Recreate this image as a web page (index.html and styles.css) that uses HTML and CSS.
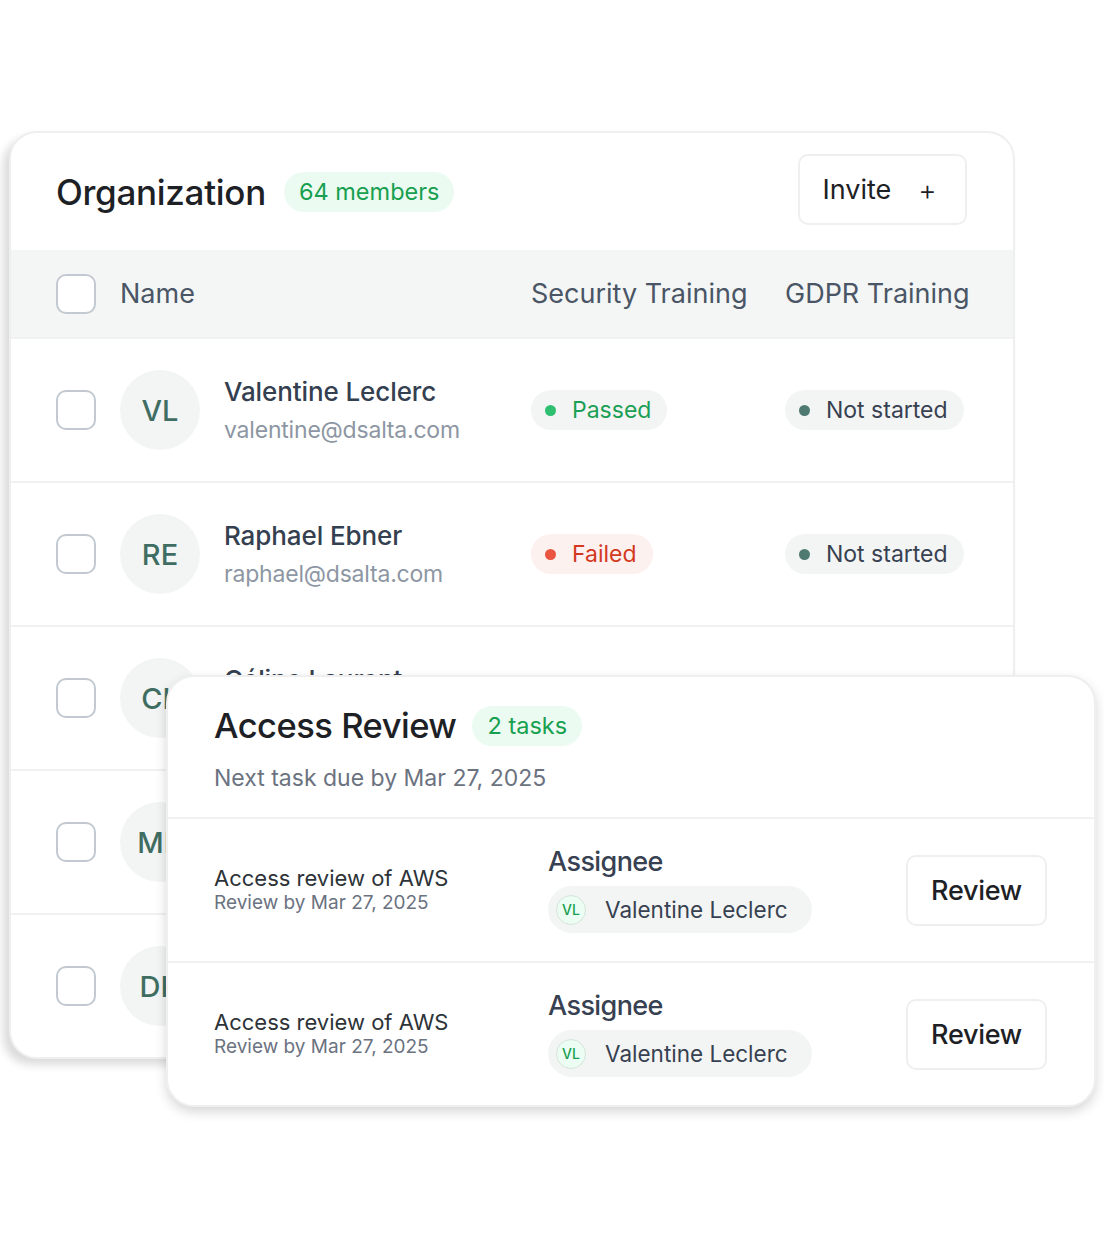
FILE: index.html
```html
<!DOCTYPE html>
<html lang="en">
<head>
    <meta charset="UTF-8">
    <meta name="viewport" content="width=device-width, initial-scale=1.0">
    <title>Organization</title>
    <link rel="stylesheet" href="styles.css">
</head>
<body>
    <div class="stage">

        <!-- members table -->
        <div class="card org-card">
            <div class="card-head">
                <h2>Organization</h2>
                <span class="count-badge">64 members</span>
                <button class="btn invite-btn">Invite <span class="plus">+</span></button>
            </div>

            <div class="table-row table-head">
                <span class="checkbox"></span>
                <span class="col-name">Name</span>
                <span class="col-status">Security Training</span>
                <span class="col-status">GDPR Training</span>
            </div>

            <div class="table-row">
                <span class="checkbox"></span>
                <div class="col-name member">
                    <span class="avatar">VL</span>
                    <div>
                        <div class="member-name">Valentine Leclerc</div>
                        <div class="member-email">valentine@dsalta.com</div>
                    </div>
                </div>
                <div class="col-status"><span class="status passed">Passed</span></div>
                <div class="col-status"><span class="status idle">Not started</span></div>
            </div>

            <div class="table-row">
                <span class="checkbox"></span>
                <div class="col-name member">
                    <span class="avatar">RE</span>
                    <div>
                        <div class="member-name">Raphael Ebner</div>
                        <div class="member-email">raphael@dsalta.com</div>
                    </div>
                </div>
                <div class="col-status"><span class="status failed">Failed</span></div>
                <div class="col-status"><span class="status idle">Not started</span></div>
            </div>

            <div class="table-row">
                <span class="checkbox"></span>
                <div class="col-name member">
                    <span class="avatar">CL</span>
                    <div>
                        <div class="member-name">Céline Laurent</div>
                        <div class="member-email">celine@dsalta.com</div>
                    </div>
                </div>
                <div class="col-status"><span class="status passed">Passed</span></div>
                <div class="col-status"><span class="status idle">Not started</span></div>
            </div>

            <div class="table-row">
                <span class="checkbox"></span>
                <div class="col-name member">
                    <span class="avatar">MB</span>
                    <div>
                        <div class="member-name">Marc Bernard</div>
                        <div class="member-email">marc@dsalta.com</div>
                    </div>
                </div>
                <div class="col-status"><span class="status passed">Passed</span></div>
                <div class="col-status"><span class="status idle">Not started</span></div>
            </div>

            <div class="table-row">
                <span class="checkbox"></span>
                <div class="col-name member">
                    <span class="avatar">DK</span>
                    <div>
                        <div class="member-name">David Keller</div>
                        <div class="member-email">david@dsalta.com</div>
                    </div>
                </div>
                <div class="col-status"><span class="status passed">Passed</span></div>
                <div class="col-status"><span class="status idle">Not started</span></div>
            </div>
        </div>

        <!-- review tasks popover -->
        <div class="card review-card">
            <div class="review-head">
                <div class="review-title">
                    <h2>Access Review</h2>
                    <span class="count-badge">2 tasks</span>
                </div>
                <p class="review-sub">Next task due by Mar 27, 2025</p>
            </div>

            <div class="task">
                <div class="task-info">
                    <div class="task-name">Access review of AWS</div>
                    <div class="task-due">Review by Mar 27, 2025</div>
                </div>
                <div class="task-assignee">
                    <div class="assignee-label">Assignee</div>
                    <span class="assignee"><span class="mini-avatar">VL</span>Valentine Leclerc</span>
                </div>
                <button class="btn review-btn">Review</button>
            </div>

            <div class="task">
                <div class="task-info">
                    <div class="task-name">Access review of AWS</div>
                    <div class="task-due">Review by Mar 27, 2025</div>
                </div>
                <div class="task-assignee">
                    <div class="assignee-label">Assignee</div>
                    <span class="assignee"><span class="mini-avatar">VL</span>Valentine Leclerc</span>
                </div>
                <button class="btn review-btn">Review</button>
            </div>
        </div>

    </div>
</body>
</html>
```

FILE: styles.css
```css
body {
    margin: 0;
    background: #fff;
    font-family: Inter, "Liberation Sans", Arial, sans-serif;
    color: #1d2125;
}

.stage {
    position: relative;
    width: 1104px;
    height: 1236px;
    overflow: hidden;
    padding-top: 131px;
    box-sizing: border-box;
}

.card {
    background: #fff;
    border: 2px solid #efefef;
    border-radius: 28px;
    box-sizing: border-box;
    overflow: hidden;
}

/* ---------- organization table ---------- */

.org-card {
    width: 1006px;
    margin-left: 9px;
    box-shadow: -6px 6px 8px rgba(0, 0, 0, 0.14);
}

.card-head {
    display: flex;
    align-items: center;
    height: 117px;
    padding: 0 46px 0 45px;
}

.card-head h2 {
    margin: 0 18px 0 0;
    font-size: 35px;
    font-weight: 500;
    letter-spacing: -0.3px;
}

.count-badge {
    display: inline-flex;
    align-items: center;
    height: 40px;
    padding: 0 15px;
    border-radius: 20px;
    background: #ebfbf1;
    color: #17a050;
    font-size: 23.5px;
}

.btn {
    font-family: inherit;
    background: #fff;
    border: 2px solid #efefef;
    border-radius: 10px;
    color: #1d2125;
    cursor: pointer;
}

.invite-btn {
    margin-left: auto;
    margin-bottom: 4px;
    width: 169px;
    height: 71px;
    font-size: 27px;
    display: flex;
    align-items: center;
    justify-content: center;
    gap: 27px;
    padding: 0 6px 0 0;
}

.invite-btn .plus {
    font-size: 28px;
    font-weight: 300;
}

.table-row {
    display: flex;
    align-items: center;
    height: 144px;
    padding-left: 45px;
    border-top: 2px solid #f0f1f1;
    box-sizing: border-box;
}

.table-head {
    height: 87px;
    border-top: none;
    background: #f4f6f5;
    color: #4a5565;
    font-size: 27px;
}

.checkbox {
    width: 40px;
    height: 40px;
    flex: none;
    border: 2px solid #c3c9d1;
    border-radius: 10px;
    box-sizing: border-box;
    background: #fff;
    margin-right: 24px;
}

.col-name {
    flex: none;
    width: 411px;
}

.col-status {
    flex: none;
    width: 254px;
    white-space: nowrap;
}

.member {
    display: flex;
    align-items: center;
}

.avatar {
    width: 80px;
    height: 80px;
    flex: none;
    border-radius: 50%;
    background: #f3f5f4;
    color: #3f6d62;
    font-size: 29px;
    font-weight: 500;
    display: flex;
    align-items: center;
    justify-content: center;
    margin-right: 24px;
}

.member-name {
    font-size: 26px;
    font-weight: 500;
    color: #344050;
    letter-spacing: -0.1px;
}

.member-email {
    margin-top: 9px;
    font-size: 23px;
    color: #8d96a3;
    letter-spacing: -0.2px;
}

.status {
    display: inline-flex;
    align-items: center;
    height: 40px;
    padding: 0 16px 0 14px;
    border-radius: 20px;
    background: #f3f5f4;
    font-size: 23px;
}

.status::before {
    content: "";
    width: 11px;
    height: 11px;
    border-radius: 50%;
    margin-right: 16px;
}

.status.passed { color: #1a9f55; }
.status.passed::before { background: #2fbf71; }

.status.failed { color: #d3391f; background: #fdf1ef; }
.status.failed::before { background: #ea5541; }

.status.idle { color: #374151; }
.status.idle::before { background: #4f7a72; }

/* ---------- access review popover ---------- */

.review-card {
    position: absolute;
    left: 166px;
    top: 675px;
    width: 930px;
    box-shadow: 0 5px 12px rgba(0, 0, 0, 0.16);
}

.review-head {
    height: 140px;
    padding: 28px 47px 0 46px;
    box-sizing: border-box;
}

.review-title {
    display: flex;
    align-items: center;
}

.review-title h2 {
    margin: 0 16px 0 0;
    font-size: 34.5px;
    font-weight: 500;
    letter-spacing: -0.5px;
}

.review-sub {
    margin: 18px 0 0;
    font-size: 23px;
    color: #6b7280;
}

.task {
    display: flex;
    align-items: center;
    height: 144px;
    padding: 0 47px 0 46px;
    border-top: 2px solid #f0f1f1;
    box-sizing: border-box;
}

.task-info {
    width: 334px;
    padding-bottom: 2px;
}

.task-name {
    font-size: 22px;
    color: #2d3338;
}

.task-due {
    font-size: 19px;
    color: #6b7280;
}

.assignee-label {
    font-size: 27px;
    line-height: 1.1;
    font-weight: 500;
    color: #374151;
    letter-spacing: -0.6px;
    margin-bottom: 10px;
}

.assignee {
    display: inline-flex;
    align-items: center;
    height: 47px;
    padding: 0 24px 0 8px;
    border-radius: 24px;
    background: #f3f5f4;
    font-size: 22.5px;
    color: #374151;
}

.mini-avatar {
    width: 30px;
    height: 30px;
    border-radius: 50%;
    box-sizing: border-box;
    border: 1px solid #d5e4da;
    background: #ecfdf3;
    color: #16a04f;
    font-size: 14px;
    font-weight: 500;
    display: flex;
    align-items: center;
    justify-content: center;
    margin-right: 19px;
}

.review-btn {
    margin-left: auto;
    width: 141px;
    height: 71px;
    font-size: 27px;
    font-weight: 500;
    letter-spacing: -0.3px;
    padding: 0;
}
```
